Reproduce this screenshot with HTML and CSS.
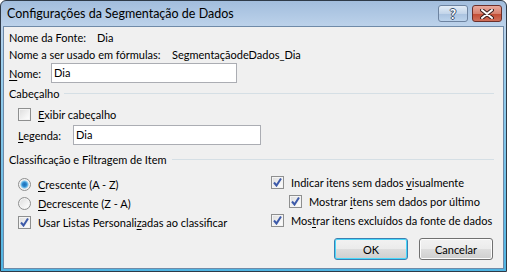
FILE: index.html
```html
<!DOCTYPE html>
<html lang="pt">
<head>
    <meta charset="UTF-8">
    <title>Configurações da Segmentação de Dados</title>
    <link rel="stylesheet" href="styles.css">
</head>
<body>
    <div class="window">
        <div class="titlebar">
            <span class="title">Configurações da Segmentação de Dados</span>
            <span class="cap-btn help-btn">?</span>
            <span class="cap-btn close-btn">
                <svg width="14" height="10" viewBox="0 0 14 10">
                    <path d="M2 1 L12 9 M12 1 L2 9" stroke="#3b2020" stroke-width="4" stroke-linecap="round"/>
                    <path d="M2 1 L12 9 M12 1 L2 9" stroke="#ffffff" stroke-width="2" stroke-linecap="round"/>
                </svg>
            </span>
        </div>
        <div class="client">
            <div class="info-row"><span class="info-label w1">Nome da Fonte:</span><span>Dia</span></div>
            <div class="info-row"><span class="info-label w2">Nome a ser usado em fórmulas:</span><span>SegmentaçãodeDados_Dia</span></div>
            <div class="field-row">
                <label class="field-label w3"><u>N</u>ome:</label>
                <div class="textbox name-box">Dia</div>
            </div>

            <div class="group-head"><span>Cabeçalho</span><span class="group-line"></span></div>
            <div class="indent">
                <div class="check-row"><span class="check"></span><span><u>E</u>xibir cabeçalho</span></div>
                <div class="field-row legend-row">
                    <label class="field-label w4"><u>L</u>egenda:</label>
                    <div class="textbox legend-box">Dia</div>
                </div>
            </div>

            <div class="group-head sort-head"><span>Classificação e Filtragem de Item</span><span class="group-line"></span></div>
            <div class="lower">
                <div class="col-left">
                    <div class="opt-row"><span class="radio on"></span><span><u>C</u>rescente (A - Z)</span></div>
                    <div class="opt-row"><span class="radio"></span><span><u>D</u>ecrescente (Z - A)</span></div>
                    <div class="opt-row"><span class="check on"></span><span>Usar Listas Personali<u>z</u>adas ao classificar</span></div>
                </div>
                <div class="col-right">
                    <div class="opt-row"><span class="check on"></span><span>Indicar itens sem dados <u>v</u>isualmente</span></div>
                    <div class="opt-row sub"><span class="check on"></span><span>Mostrar <u>i</u>tens sem dados por último</span></div>
                    <div class="opt-row"><span class="check on"></span><span>Mos<u>t</u>rar itens excluídos da fonte de dados</span></div>
                    <div class="buttons">
                        <button class="btn default">OK</button>
                        <button class="btn">Cancelar</button>
                    </div>
                </div>
            </div>
        </div>
    </div>
</body>
</html>
```

FILE: styles.css
```css
body {
    margin: 0;
    font-family: Lato, "Noto Sans", sans-serif;
    font-size: 11px;
    color: #000;
    background: #fff;
    white-space: nowrap;
}
.window {
    width: 507px;
    height: 272px;
    box-sizing: border-box;
    border: 1px solid #2e3a48;
    border-radius: 6px 6px 0 0;
    background: linear-gradient(#a2bddd, #bcd2ea 25px, #9fd0ee 60px, #4fb4e2);
    display: flex;
    flex-direction: column;
}
.titlebar {
    height: 25px;
    display: flex;
    align-items: flex-start;
    padding: 4px 4px 0 6px;
    box-sizing: border-box;
    flex-shrink: 0;
}
.title {
    flex: 1;
    font-size: 12.5px;
    line-height: 17px;
}
.cap-btn {
    width: 30px;
    height: 17px;
    box-sizing: border-box;
    border-radius: 3px;
    display: flex;
    justify-content: center;
    align-items: center;
}
.help-btn {
    margin-right: 4px;
    border: 1px solid #6d83a0;
    background: linear-gradient(#e3ecf6, #c3d5ea 50%, #a9c2df 51%, #bcd3ec);
    color: #fff;
    font-weight: bold;
    font-size: 13px;
    text-shadow: -1px 0 #3c4f6a, 1px 0 #3c4f6a, 0 -1px #3c4f6a, 0 1px #3c4f6a;
}
.close-btn {
    border: 1px solid #6b2f2a;
    background: linear-gradient(#e9a99d, #d7816f 50%, #c24a32 51%, #d0705b);
}
.client {
    flex: 1;
    margin: 0 2px 2px 2px;
    border: 1px solid #6f8aa8;
    background: #f0f0f0;
    padding: 2px 5px 0 5px;
}
.info-row {
    height: 17px;
    line-height: 17px;
    display: flex;
}
.w1 { width: 88px; }
.w2 { width: 163px; }
.w3 { width: 42px; }
.w4 { width: 55px; }
.field-row {
    height: 20px;
    display: flex;
    align-items: center;
}
.textbox {
    height: 20px;
    box-sizing: border-box;
    border: 1px solid #abadb3;
    background: #fff;
    padding-left: 2px;
    line-height: 18px;
}
.name-box { width: 186px; }
.group-head {
    height: 16px;
    margin-top: 2px;
    display: flex;
    align-items: center;
    padding-right: 4px;
}
.group-line {
    flex: 1;
    height: 1px;
    background: #d5dfe5;
    margin-left: 5px;
}
.indent {
    padding-left: 9px;
}
.check-row {
    height: 17px;
    margin-top: 5px;
    display: flex;
    align-items: center;
}
.legend-row {
    margin-top: 2px;
}
.legend-box { width: 188px; }
.sort-head {
    margin-top: 6px;
}
.lower {
    display: flex;
    padding-right: 5px;
}
.col-left {
    flex: 1;
    padding-left: 9px;
    margin-top: 8px;
}
.col-right {
    width: 222px;
    margin-top: 6px;
}
.opt-row {
    height: 19px;
    display: flex;
    align-items: center;
}
.opt-row.sub {
    padding-left: 18px;
}
.check,
.radio {
    width: 13px;
    height: 13px;
    box-sizing: border-box;
    border: 1px solid #8e8f8f;
    margin-right: 7px;
    flex-shrink: 0;
    background: linear-gradient(135deg, #dcdcdc, #f6f6f6 70%, #ffffff);
    box-shadow: inset 0 0 0 1px #f4f4f4;
}
.check.on {
    background-image: url("data:image/svg+xml,%3Csvg xmlns='http://www.w3.org/2000/svg' width='11' height='11'%3E%3Cpath d='M2 5.5 L4.5 8.5 L9 1.5' fill='none' stroke='%233d5aa9' stroke-width='2'/%3E%3C/svg%3E"), linear-gradient(135deg, #dcdcdc, #f6f6f6 70%, #ffffff);
    background-repeat: no-repeat;
    background-position: center;
}
.radio {
    border-radius: 50%;
}
.radio.on {
    background: radial-gradient(circle, #1f6fb8 0, #2a86cc 2px, #7fc7ef 3.5px, #e8e8e8 4.5px, #ffffff 6px);
}
.buttons {
    display: flex;
    justify-content: flex-end;
    gap: 11px;
    margin-top: 8px;
}
.btn {
    width: 74px;
    height: 22px;
    font-family: Lato, "Noto Sans", sans-serif;
    font-size: 11px;
    color: #000;
    border: 1px solid #707070;
    border-radius: 3px;
    background: linear-gradient(#f2f2f2, #ebebeb 50%, #dddddd 51%, #cfcfcf);
    box-shadow: inset 0 0 0 1px #fcfcfc;
    padding: 0;
}
.btn.default {
    border-color: #3c7fb1;
    box-shadow: inset 0 0 0 1px #48d8fb;
}
u {
    text-decoration-thickness: 1px;
    text-underline-offset: 2px;
}
```
